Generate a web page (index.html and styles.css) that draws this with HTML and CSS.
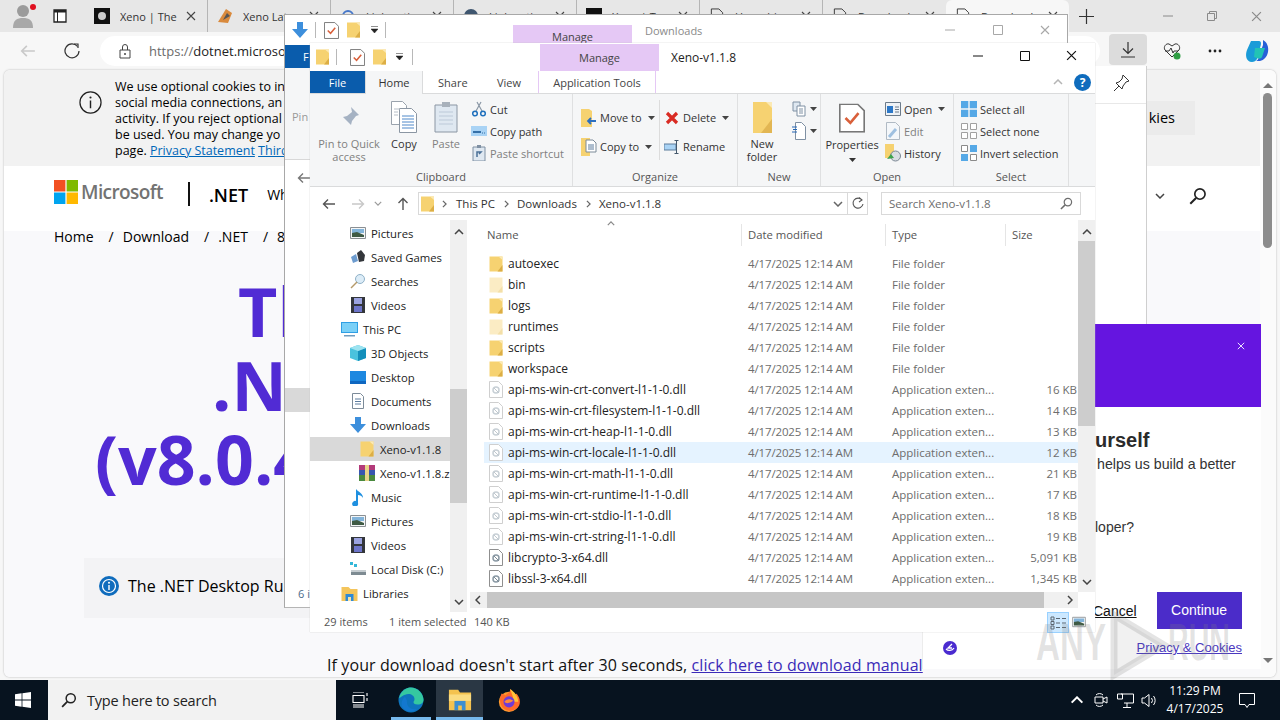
FILE: index.html
```html
<!DOCTYPE html>
<html lang="en">
<head>
<meta charset="utf-8">
<title>Xeno-v1.1.8</title>
<link rel="stylesheet" href="styles.css">
</head>
<body>
<svg class="sprite" width="0" height="0">
  <defs>
    <symbol id="folder" viewBox="0 0 13 16"><path d="M0 .5h13v15H0z" fill="#f6d271"/><path d="M13 9v6.500H8z" fill="#dcae45"/><path d="M9 .5h4V4z" fill="#fbe9b4"/></symbol>
    <symbol id="folder-pale" viewBox="0 0 13 16"><path d="M0 .5h13v15H0z" fill="#fbecc4"/><path d="M13 9v6.500H8z" fill="#f3dfa8"/></symbol>
    <symbol id="dll" viewBox="0 0 14 17"><path d="M.5.5h9l4 4v12H.5z" fill="#fff" stroke="#8f8f8f"/><circle cx="7" cy="9" r="3" fill="none" stroke="#8b9aa5" stroke-width="1.500"/><path d="M5 7l5 5" stroke="#7d8b95"/></symbol>
    <symbol id="dll-pale" viewBox="0 0 14 17"><path d="M.5.5h9l4 4v12H.5z" fill="#fff" stroke="#cfcfcf"/><circle cx="7" cy="9" r="3" fill="none" stroke="#c8d0d6" stroke-width="1.500"/><path d="M5 7l5 5" stroke="#c0c8ce"/></symbol>
    <symbol id="propdoc" viewBox="0 0 16 18"><path d="M.5.5h11l4 4v13H.5z" fill="#fff" stroke="#777"/><path d="M4 9l3 3 5-6" fill="none" stroke="#d9603b" stroke-width="1.600"/></symbol>
    <symbol id="xmark" viewBox="0 0 10 10"><path d="M1 1l8 8M9 1l-8 8" fill="none" stroke="currentColor" stroke-width="1.100"/></symbol>
    <symbol id="caret" viewBox="0 0 7 4"><path d="M0 0h7L3.500 4z" fill="currentColor"/></symbol>
    <symbol id="chev-up" viewBox="0 0 10 6"><path d="M1 5l4-4 4 4" fill="none" stroke="currentColor" stroke-width="1.500"/></symbol>
    <symbol id="chev-down" viewBox="0 0 10 6"><path d="M1 1l4 4 4-4" fill="none" stroke="currentColor" stroke-width="1.500"/></symbol>
    <symbol id="chev-right" viewBox="0 0 6 10"><path d="M1 1l4 4-4 4" fill="none" stroke="currentColor" stroke-width="1.500"/></symbol>
    <symbol id="chev-left" viewBox="0 0 6 10"><path d="M5 1L1 5l4 4" fill="none" stroke="currentColor" stroke-width="1.500"/></symbol>
    <symbol id="arrow-left" viewBox="0 0 14 12"><path d="M13 6H1.500M6 1.500L1.500 6 6 10.500" fill="none" stroke="currentColor" stroke-width="1.400"/></symbol>
    <symbol id="arrow-up" viewBox="0 0 12 14"><path d="M6 13V1.500M1.500 6L6 1.500 10.500 6" fill="none" stroke="currentColor" stroke-width="1.400"/></symbol>
    <symbol id="down-blue" viewBox="0 0 16 16"><path d="M5 0h6v7h5l-8 9-8-9h5z" fill="#3d8fdc"/></symbol>
    <symbol id="monitor" viewBox="0 0 17 15"><path d="M0 0h17v11H0z" fill="#2f9fe4"/><path d="M1 1h15v9H1z" fill="#7bd0f7"/><path d="M3 13h11v1.500H3z" fill="#6f9dc0"/></symbol>
    <symbol id="picture" viewBox="0 0 16 14"><path d="M.5 1.500h15v11H.5z" fill="#f4f6f7" stroke="#8a8f93"/><path d="M2 3h12v4H2z" fill="#83b4da"/><path d="M2 7l5-1 7 3v2H2z" fill="#3f5a44"/></symbol>
    <symbol id="film" viewBox="0 0 14 16"><path d="M0 0h14v16H0z" fill="#33363b"/><path d="M3 1h8v6H3z" fill="#9aa2df"/><path d="M3 9h8v6H3z" fill="#6d75c9"/></symbol>
    <symbol id="games" viewBox="0 0 16 16"><path d="M1 8l5-3 2 7-5 2z" fill="#6d9ccf"/><path d="M7 4l4-3 4 5-1 6-5 1z" fill="#33363b"/></symbol>
    <symbol id="searches" viewBox="0 0 16 16"><circle cx="10" cy="6" r="4.500" fill="#dcecf7" stroke="#8fb1c8"/><path d="M7 9l-6 6" stroke="#b59a6a" stroke-width="1.500"/></symbol>
    <symbol id="cube" viewBox="0 0 16 16"><path d="M8 0l8 3v10l-8 3-8-3V3z" fill="#4ac2dd"/><path d="M8 6l8-3v10l-8 3z" fill="#138fbb"/><path d="M0 3l8-3 8 3-8 3z" fill="#9de3f0"/></symbol>
    <symbol id="desktop" viewBox="0 0 16 13"><path d="M0 0h16v13H0z" fill="#1d88e0"/><path d="M0 10h16v3H0z" fill="#0f67c0"/></symbol>
    <symbol id="document" viewBox="0 0 12 16"><path d="M.5.5h8l3 3v12H.5z" fill="#fff" stroke="#7c8b99"/><path d="M3 6h6M3 8.500h6M3 11h6" stroke="#5c7c9e"/></symbol>
    <symbol id="zipicon" viewBox="0 0 16 16"><path d="M0 0h16v5H0z" fill="#b33a7a"/><path d="M0 5h16v5H0z" fill="#3856b0"/><path d="M0 10h16v6H0z" fill="#4a8a3f"/><path d="M6 0h4v16H6z" fill="#e8d48a"/></symbol>
    <symbol id="music" viewBox="0 0 12 17"><path d="M4 12V0c2 3 7 4 7 9-1-2-3-3-5-3v8a3 3 0 1 1-2-2z" fill="#1f90e0"/></symbol>
    <symbol id="disk" viewBox="0 0 16 14"><path d="M1 8h15v5H1z" fill="#7e8b92"/><path d="M1 8h15v2H1z" fill="#c6cdd1"/><path d="M0 0h3v3H0zM4 2h3v3H4z" fill="#33b7d8"/></symbol>
    <symbol id="libraries" viewBox="0 0 16 15"><path d="M0 1h7l2 2h7v12H0z" fill="#f4c55c"/><path d="M4 8h8v7H4z" fill="#2f8ad6"/><path d="M6.500 11h3v4h-3z" fill="#f6e3a8"/></symbol>
    <symbol id="pin" viewBox="0 0 24 24"><path d="M14 2l8 8-3 1-4 5-1 4-4-4-6 6 6-6-4-4 4-1 5-4z" fill="#a5b2c3"/></symbol>
    <symbol id="copy" viewBox="0 0 26 32"><path d="M.5.5h11l4 4v19H.5z" fill="#fff" stroke="#9aa3ad"/><path d="M8.500 7.500h12l5 5v19h-17z" fill="#fff" stroke="#8b96a3"/><path d="M11 15h12M11 18h12M11 21h12M11 24h12M11 27h12" stroke="#4f88c9"/><path d="M3 8h6M3 11h4M3 14h4" stroke="#b6bec7"/></symbol>
    <symbol id="paste" viewBox="0 0 24 32"><path d="M1 4h22v27H1z" fill="#dfe8f1" stroke="#8b96a3"/><path d="M8 1h8v5H8z" fill="#a8b1bb"/><path d="M5 11h14M5 15h14M5 19h14M5 23h14" stroke="#bcc9d8"/></symbol>
    <symbol id="scissors" viewBox="0 0 16 16"><path d="M10 1L5 10M6 1l5 9" fill="none" stroke="#8a97a5" stroke-width="1.200"/><circle cx="4" cy="12.500" r="2.300" fill="none" stroke="#1f70bd" stroke-width="1.500"/><circle cx="12" cy="12.500" r="2.300" fill="none" stroke="#1f70bd" stroke-width="1.500"/></symbol>
    <symbol id="path" viewBox="0 0 16 12"><path d="M0 1h16v10H0z" fill="#a9d3f5"/><path d="M2 7h8" stroke="#3570a8" stroke-width="2"/><path d="M11 8h3" stroke="#3570a8" stroke-dasharray="1 1"/></symbol>
    <symbol id="shortcut" viewBox="0 0 14 16"><path d="M1 2h12v14H1z" fill="#dfe8f1" stroke="#7f90a3"/><path d="M5 0h4v3H5z" fill="#7f90a3"/><path d="M5 12V7h4l-2 2" fill="none" stroke="#4a6f96" stroke-width="1.500"/></symbol>
    <symbol id="moveto" viewBox="0 0 16 18"><path d="M0 0h8l3 2v16H0z" fill="#f6d271"/><path d="M15 12H7M10 9l-3 3 3 3" fill="none" stroke="#2c6fc0" stroke-width="1.800"/></symbol>
    <symbol id="copyto" viewBox="0 0 16 18"><path d="M0 0h9v18H0z" fill="#f6d271"/><path d="M5 2h7l3 3v9H5z" fill="#fff" stroke="#7d8b99"/><path d="M7 7h6M7 9h6M7 11h6" stroke="#5c7c9e"/></symbol>
    <symbol id="delete" viewBox="0 0 14 14"><path d="M2 2l10 10M12 2L2 12" stroke="#d92b23" stroke-width="3.200"/></symbol>
    <symbol id="rename" viewBox="0 0 16 14"><path d="M0 4h12v6H0z" fill="#a9d3f5" stroke="#5d7d9c"/><path d="M12.500 0v14M10.500 .5h4M10.500 13.500h4" stroke="#44586c"/></symbol>
    <symbol id="newfolder" viewBox="0 0 19 32"><path d="M0 1h19v31H0z" fill="#f6d271"/><path d="M19 18v14H8z" fill="#e2b653"/><path d="M13 1h6v6z" fill="#fbe9b4"/></symbol>
    <symbol id="newitem" viewBox="0 0 14 16"><path d="M1 1h7v9H1z" fill="#dfe8f1" stroke="#7f90a3"/><path d="M5 5h8v10H5z" fill="#fff" stroke="#7f90a3"/><path d="M7 8h4M7 10h4M7 12h4" stroke="#7f90a3"/></symbol>
    <symbol id="easy" viewBox="0 0 14 18"><path d="M3.500 .5h6l4 4v13h-10z" fill="#fff" stroke="#7f90a3"/><path d="M0 5h5M1 7.500h4M0 10h5" stroke="#2667b5"/></symbol>
    <symbol id="openicon" viewBox="0 0 16 14"><path d="M.5.5h15v13H.5z" fill="#eef2f6" stroke="#6c7b8a"/><path d="M2 4h6v7H2z" fill="#2c78c8"/><path d="M10 5h4M10 7.500h4M10 10h4" stroke="#6c7b8a"/></symbol>
    <symbol id="edit" viewBox="0 0 14 18"><path d="M.5.5h9l4 4v13H.5z" fill="#f4f7fa" stroke="#b0bac4"/><path d="M3 15L10 7" stroke="#9fc0e0" stroke-width="3"/></symbol>
    <symbol id="history" viewBox="0 0 16 18"><path d="M0 0h9v14H0z" fill="#f6d271"/><circle cx="10.500" cy="12" r="5" fill="#d9dee3" stroke="#7b8794"/><path d="M2 15l4-5 3 4" fill="#3fa34d"/></symbol>
    <symbol id="selall" viewBox="0 0 16 16"><path d="M0 0h7.300v7.300H0zM8.700 0H16v7.300H8.700zM0 8.700h7.300V16H0zM8.700 8.700H16V16H8.700z" fill="#55a8e6"/></symbol>
    <symbol id="selnone" viewBox="0 0 16 16"><path d="M.5.5h6v6h-6zM9.500.5h6v6h-6zM.5 9.500h6v6h-6zM9.500 9.500h6v6h-6z" fill="#fff" stroke="#a0a0a0"/></symbol>
    <symbol id="selinv" viewBox="0 0 16 16"><path d="M9 0h7v7H9zM0 9h7v7H0z" fill="#55a8e6"/><path d="M.5.5h6v6h-6zM9.500 9.500h6v6h-6z" fill="#fff" stroke="#8a8a8a"/></symbol>
    <symbol id="magnifier" viewBox="0 0 14 14"><circle cx="8.500" cy="5.500" r="4" fill="none" stroke="currentColor" stroke-width="1.300"/><path d="M5.500 8.500L1 13" stroke="currentColor" stroke-width="1.600"/></symbol>
  </defs>
</svg>

<div class="screen">
  <div class="edge">
    <div class="tabstrip">
      <div class="strip-lead">
        <span class="avatar"><svg width="20" height="26" viewBox="0 0 20 26"><circle cx="10" cy="8" r="6" fill="#9b9b9b"/><path d="M0 25c0-8 4-10 10-10s10 2 10 10z" fill="#a8a8a8"/></svg><span class="avatar-dot"></span></span>
        <svg class="vtabs" width="14" height="14" viewBox="0 0 14 14"><path d="M1 1h12v12H1z" fill="#fff" stroke="#222" stroke-width="1.300"/><path d="M1 1h12v2.500H1z" fill="#222"/><path d="M4.500 3v10" stroke="#222"/></svg>
      </div>
      <div class="tab tab-sep"><svg class="fav" width="16" height="16" viewBox="0 0 16 16"><path d="M0 0h16v16H0z" fill="#111"/><circle cx="8" cy="8" r="4" fill="#ccc"/></svg><span class="tab-title">Xeno | The</span><svg class="tab-x" width="10" height="10"><use href="#xmark"/></svg></div>
      <div class="tab tab-sep"><svg class="fav" width="16" height="16" viewBox="0 0 16 16"><path d="M1 14L9 1l6 4-4 10z" fill="#d98a3d"/><path d="M6 12l4-7 3 3z" fill="#555"/></svg><span class="tab-title">Xeno Lat</span><svg class="tab-x" width="10" height="10"><use href="#xmark"/></svg></div>
      <div class="tab tab-sep"><svg class="fav" width="16" height="16" viewBox="0 0 16 16"><circle cx="8" cy="8" r="5" fill="none" stroke="#4778c9" stroke-width="2"/></svg><span class="tab-title">Linkvertis</span><svg class="tab-x" width="10" height="10"><use href="#xmark"/></svg></div>
      <div class="tab tab-sep"><svg class="fav" width="16" height="16" viewBox="0 0 16 16"><circle cx="8" cy="8" r="7" fill="#3f566f"/></svg><span class="tab-title">Linkvertis</span><svg class="tab-x" width="10" height="10"><use href="#xmark"/></svg></div>
      <div class="tab tab-sep"><svg class="fav" width="16" height="16" viewBox="0 0 16 16"><path d="M0 0h16v16H0z" fill="#111"/></svg><span class="tab-title">Xeno | T</span><svg class="tab-x" width="10" height="10"><use href="#xmark"/></svg></div>
      <div class="tab tab-sep"><svg class="fav" width="16" height="16" viewBox="0 0 14 17"><path d="M1 1h8l4 4v11H1z" fill="none" stroke="#333"/></svg><span class="tab-title">Hanashi</span><svg class="tab-x" width="10" height="10"><use href="#xmark"/></svg></div>
      <div class="tab"><svg class="fav" width="16" height="16" viewBox="0 0 14 17"><path d="M1 1h8l4 4v11H1z" fill="none" stroke="#333"/></svg><span class="tab-title">Download</span><svg class="tab-x" width="10" height="10"><use href="#xmark"/></svg></div>
      <div class="tab tab-active"><svg class="fav" width="16" height="16" viewBox="0 0 14 17"><path d="M1 1h8l4 4v11H1z" fill="none" stroke="#333"/></svg><span class="tab-title">Download</span><svg class="tab-x" width="10" height="10"><use href="#xmark"/></svg></div>
      <svg class="newtab" width="15" height="15" viewBox="0 0 15 15"><path d="M7.500 0v15M0 7.500h15" stroke="#333" stroke-width="1.200"/></svg>
      <div class="edge-ctrl">
        <svg width="10" height="10" viewBox="0 0 10 10"><path d="M0 5h10" stroke="#8a8a8a"/></svg>
        <svg width="10" height="10" viewBox="0 0 10 10"><path d="M.5 2.500h7v7h-7zM2.500 2.500v-2h7v7h-2" fill="none" stroke="#8a8a8a"/></svg>
        <svg class="edge-x" width="11" height="11"><use href="#xmark"/></svg>
      </div>
    </div>
    <div class="toolbar">
      <svg class="tb-back" width="16" height="14"><use href="#arrow-left"/></svg>
      <svg class="tb-reload" width="16" height="16" viewBox="0 0 16 16"><path d="M13.500 3.500A7 7 0 1 0 15 8" fill="none" stroke="#333" stroke-width="1.200"/><path d="M10 1h4v4" fill="none" stroke="#333" stroke-width="1.200"/></svg>
      <div class="omnibox">
        <svg width="12" height="15" viewBox="0 0 12 15"><path d="M1 6h10v8H1zM3.500 6V3a2.500 2.500 0 0 1 5 0v3" fill="none" stroke="#444"/><circle cx="6" cy="10" r="1" fill="#444"/></svg>
        <span class="url"><span class="url-dim">https://</span>dotnet.microso</span>
      </div>
      <div class="tb-right">
        <span class="dl-btn"><svg width="14" height="16" viewBox="0 0 14 16"><path d="M7 0v11M2 6.500l5 5 5-5M0 15h14" fill="none" stroke="#333" stroke-width="1.200"/></svg></span>
        <svg class="tb-heart" width="18" height="18" viewBox="0 0 18 18"><path d="M9 15L2 8c-2-3 1-7 4-6l3 2 3-2c3-1 6 3 4 6z" fill="none" stroke="#333"/><path d="M2 9h4l2-3 2 5 1-2h4" fill="none" stroke="#333"/><circle cx="14" cy="14" r="3.500" fill="#2f9e44"/></svg>
        <svg class="tb-dots" width="14" height="4" viewBox="0 0 14 4"><circle cx="2" cy="2" r="1.400" fill="#222"/><circle cx="7" cy="2" r="1.400" fill="#222"/><circle cx="12" cy="2" r="1.400" fill="#222"/></svg>
        <svg class="tb-copilot" width="24" height="24" viewBox="0 0 24 24"><path d="M6 2h8c3 0 2 4 1 7l-3 11c-1 2-3 3-5 3-6 0-7-7-5-12z" fill="#1a9bd8"/><path d="M18 1c4 2 6 7 5 12-1 5-4 8-8 9H11c3-1 3-5 4-8l3-8z" fill="#2761d8"/><path d="M10 9h10l-3 9c-2 3-5 1-8 0z" fill="#22c3b5"/></svg>
      </div>
    </div>
    <main class="viewport">
      <div class="page">
        <div class="cookie">
          <svg class="cookie-i" width="23" height="23" viewBox="0 0 24 24"><circle cx="12" cy="12" r="11" fill="none" stroke="#222" stroke-width="1.300"/><path d="M12 10v8" stroke="#222" stroke-width="1.500"/><circle cx="12" cy="6.800" r="1.100" fill="#222"/></svg>
          <p class="cookie-text">We use optional cookies to in<br>social media connections, an<br>activity. If you reject optional<br>be used. You may change yo<br>page. <a href="#">Privacy Statement</a> <a href="#">Third</a></p>
          <span class="cookie-btn">kies</span>
        </div>
        <header class="site-head">
          <svg class="ms-logo" width="24" height="24" viewBox="0 0 24 24"><path d="M0 0h11.400v11.400H0z" fill="#f25022"/><path d="M12.600 0H24v11.400H12.600z" fill="#7fba00"/><path d="M0 12.600h11.400V24H0z" fill="#00a4ef"/><path d="M12.600 12.600H24V24H12.600z" fill="#ffb900"/></svg>
          <span class="ms-word">Microsoft</span>
          <span class="head-div"></span>
          <span class="net">.NET</span>
          <span class="head-link">Wh</span>
          <span class="head-tools">
            <svg width="10" height="6" class="head-chev"><use href="#chev-down"/></svg>
            <svg width="18" height="18" viewBox="0 0 14 14" class="head-search"><use href="#magnifier"/></svg>
          </span>
        </header>
        <div class="page-body">
          <nav class="crumbs"><span>Home</span><span class="crumb-s">/</span><span>Download</span><span class="crumb-s">/</span><span>.NET</span><span class="crumb-s">/</span><span>8</span></nav>
          <h1 class="hero"><span class="hero-1">Th</span><span class="hero-2">.NE</span><span class="hero-3">(v8.0.4</span></h1>
          <div class="note">
            <svg width="20" height="20" viewBox="0 0 20 20"><circle cx="10" cy="10" r="10" fill="#0f6cbd"/><circle cx="10" cy="10" r="6.500" fill="none" stroke="#fff" stroke-width="1.200"/><path d="M10 9v5" stroke="#fff" stroke-width="1.400"/><circle cx="10" cy="6.700" r="1" fill="#fff"/></svg>
            <span>The .NET Desktop Ru</span>
          </div>
          <p class="manual">If your download doesn't start after 30 seconds, <a href="#">click here to download manual</a></p>
        </div>
      </div>
      <div class="page-scroll">
        <span class="ps-up"></span>
        <span class="ps-thumb"></span>
        <span class="ps-down"></span>
      </div>
    </main>
  </div>

  <footer class="taskbar">
    <svg class="start" width="16" height="16" viewBox="0 0 16 16"><path d="M0 2.200l6.600-.9v6.300H0zM7.400 1.200L16 0v7.600H7.400zM0 8.400h6.600v6.300L0 13.800zM7.400 8.400H16V16l-8.600-1.200z" fill="#fff"/></svg>
    <div class="tb-search"><svg width="16" height="16" viewBox="0 0 14 14"><use href="#magnifier"/></svg><span>Type here to search</span></div>
    <svg class="tv" width="16" height="16" viewBox="0 0 16 16"><path d="M1 0h11M1 15h11M1 13h11M1 3.500h11v7H1zM15 1v3M15 6v3" fill="none" stroke="#fff" stroke-width="1.100"/></svg>
    <span class="task task-edge"><svg width="26" height="26" viewBox="0 0 26 26"><circle cx="13" cy="13" r="12.500" fill="#0e74bd"/><path d="M1 11C3 3 9 .500 13 .500c6 0 12 5 12.500 12 .2 3-2 5-6 5-3 0-4-1-4-2.500 0-1 1-1 1-3 0-3-3-5-6-5-5 0-8 4-9.500 4z" fill="#35c8a0"/><path d="M9 15c0 5 4 8 10 7-4 4-13 3-15-3-1-3 0-7 3-9 1 1 2 3 2 5z" fill="#1378cf"/></svg></span>
    <span class="task task-files"><svg width="24" height="22" viewBox="0 0 26 22"><path d="M1 0h10l2 3h12v19H1z" fill="#f4c24f"/><path d="M1 5h24v7H1z" fill="#fbdc82"/><path d="M7 12h12v10H7z" fill="#3d8ed0"/><path d="M11 17h4v5h-4z" fill="#f4c24f"/></svg></span>
    <span class="task task-fx"><svg width="24" height="26" viewBox="0 0 26 26"><circle cx="13" cy="15" r="11" fill="#ff9a2e"/><path d="M5 6C3 10 2 16 6 21c6 6 15 4 18-2 2-5 0-10-3-13-1 1 0 4-2 4C19 6 16 3 14 1c1 4-3 5-5 7-1-1-2-1-4-2z" fill="#ff6a2a"/><path d="M14 1c5 3 9 8 9 14h-5c0-5-2-9-4-14z" fill="#ffc23a"/><circle cx="13" cy="15" r="6" fill="#6f3bd8"/><path d="M8 15c2-3 6-4 10-1-2 0-3 2-5 2-2 1-4 0-5-1z" fill="#ff8a3a"/></svg></span>
    <div class="tray">
      <svg width="14" height="8" viewBox="0 0 10 6" class="tray-caret"><use href="#chev-up"/></svg>
      <svg class="tray-meet" width="14" height="18" viewBox="0 0 14 18"><path d="M2 4a5 5 0 0 1 7 0M2 14a5 5 0 0 0 7 0" fill="none" stroke="#fff"/><path d="M1 6h8v6H1zM9 8l4-2v6l-4-2" fill="none" stroke="#fff"/></svg>
      <svg width="17" height="15" viewBox="0 0 17 15"><path d="M4 1h12.500v9H7M0.500 1h5v5h-5zM10 10v4M6 14.500h8" fill="none" stroke="#fff"/></svg>
      <svg width="17" height="15" viewBox="0 0 17 15"><path d="M1 5h2.500L8 1.500v12L3.500 10H1zM10.500 5a4 4 0 0 1 0 5M12.500 3a7 7 0 0 1 0 9" fill="none" stroke="#fff"/></svg>
      <div class="clock"><span>11:29 PM</span><span>4/17/2025</span></div>
      <svg class="notif" width="16" height="15" viewBox="0 0 16 15"><path d="M.5.5h15v11H10l-2 3-2-3H.5z" fill="none" stroke="#fff"/></svg>
    </div>
  </footer>

  <aside class="flyout">
    <svg width="18" height="18" viewBox="0 0 18 18" class="fly-pin"><path d="M11 1l6 6-3 1-3 4-1 3-3-3-5 5 5-5-3-3 3-1 3-3z" fill="#fff" stroke="#333"/></svg>
  </aside>

  <section class="survey">
    <div class="survey-head"><svg width="8" height="8" viewBox="0 0 10 10" class="survey-x"><use href="#xmark"/></svg></div>
    <div class="survey-body">
      <h2 class="survey-title">urself</h2>
      <p class="survey-line">helps us build a better</p>
      <p class="survey-q">loper?</p>
      <div class="survey-actions"><a href="#" class="survey-cancel">Cancel</a><span class="survey-go">Continue</span></div>
      <div class="survey-foot">
        <svg class="survey-swirl" width="14" height="14" viewBox="0 0 14 14"><circle cx="7" cy="7" r="7" fill="#4a2bd0"/><path d="M3 8c2 2 6 2 8-1M9 3L5 7h4" fill="none" stroke="#fff" stroke-width="1.300"/></svg>
        <a href="#" class="survey-privacy">Privacy &amp; Cookies</a>
      </div>
    </div>
  </section>

  <section class="win win-back">
    <div class="back-title">
      <svg width="16" height="16"><use href="#down-blue"/></svg>
      <span class="qat-sep"></span>
      <svg width="15" height="17"><use href="#propdoc"/></svg>
      <svg width="13" height="16"><use href="#folder"/></svg>
      <svg width="7" height="8" class="qat-drop" viewBox="0 0 7 7"><path d="M0 0h7M0 2.500h7L3.500 6.500z" fill="#222" stroke="#222" stroke-width=".5"/></svg>
      <span class="qat-sep"></span>
      <span class="back-manage">Manage</span>
      <span class="back-name">Downloads</span>
      <span class="back-ctrl">
        <svg width="10" height="10" viewBox="0 0 10 10"><path d="M0 5h10" stroke="#a8a8a8"/></svg>
        <svg width="10" height="10" viewBox="0 0 10 10"><path d="M.5.500h9v9h-9z" fill="none" stroke="#a8a8a8"/></svg>
        <svg width="10" height="10" class="back-x"><use href="#xmark"/></svg>
      </span>
    </div>
    <div class="back-strip">
      <span class="back-file">F</span>
      <div class="back-ribbon"><span class="back-pin">Pin</span></div>
      <div class="back-nav"><svg width="14" height="12"><use href="#arrow-left"/></svg></div>
      <span class="back-sel"></span>
      <span class="back-count">6 i</span>
    </div>
  </section>

  <section class="win win-front">
    <div class="title-row">
      <svg width="13" height="16"><use href="#folder"/></svg>
      <span class="qat-sep qat-sep-1"></span>
      <svg class="qat-doc" width="15" height="17"><use href="#propdoc"/></svg>
      <svg class="qat-fold" width="13" height="16"><use href="#folder"/></svg>
      <svg width="7" height="8" class="qat-drop" viewBox="0 0 7 7"><path d="M0 0h7M0 2.500h7L3.500 6.500z" fill="#222" stroke="#222" stroke-width=".5"/></svg>
      <span class="qat-sep qat-sep-2"></span>
      <span class="manage">Manage</span>
      <span class="win-name">Xeno-v1.1.8</span>
      <span class="win-ctrl">
        <svg width="10" height="10" viewBox="0 0 10 10"><path d="M0 5h10" stroke="#111"/></svg>
        <svg width="10" height="10" viewBox="0 0 10 10"><path d="M.5.500h9v9h-9z" fill="none" stroke="#111"/></svg>
        <svg width="11" height="11" class="win-x"><use href="#xmark"/></svg>
      </span>
    </div>
    <div class="tabs-row">
      <span class="rtab rtab-file">File</span>
      <span class="rtab rtab-home">Home</span>
      <span class="rtab rtab-share">Share</span>
      <span class="rtab rtab-view">View</span>
      <span class="rtab rtab-app">Application Tools</span>
      <span class="rtab-tools">
        <svg width="10" height="6" class="rt-chev"><use href="#chev-up"/></svg>
        <span class="help">?</span>
      </span>
    </div>
    <div class="ribbon">
      <div class="group g-clip">
        <div class="g-main">
          <div class="big b-pin dis"><svg class="pin-ic" width="24" height="24"><use href="#pin"/></svg><span>Pin to Quick<br>access</span></div>
          <div class="big b-copy"><svg width="26" height="32"><use href="#copy"/></svg><span>Copy</span></div>
          <div class="big b-paste dis"><svg width="24" height="32"><use href="#paste"/></svg><span>Paste</span></div>
          <div class="stack">
            <div class="small"><svg width="16" height="16"><use href="#scissors"/></svg><span>Cut</span></div>
            <div class="small"><svg width="16" height="12"><use href="#path"/></svg><span>Copy path</span></div>
            <div class="small dis"><svg width="14" height="16"><use href="#shortcut"/></svg><span>Paste shortcut</span></div>
          </div>
        </div>
        <div class="g-label">Clipboard</div>
      </div>
      <div class="group g-org">
        <div class="g-main">
          <div class="stack stack-org stack-org-a">
            <div class="small"><svg width="16" height="18"><use href="#moveto"/></svg><span>Move to</span><svg class="dd" width="7" height="4"><use href="#caret"/></svg></div>
            <div class="small"><svg width="16" height="18"><use href="#copyto"/></svg><span>Copy to</span><svg class="dd" width="7" height="4"><use href="#caret"/></svg></div>
          </div>
          <span class="org-div"></span>
          <div class="stack stack-org stack-org-b">
            <div class="small"><svg width="14" height="14"><use href="#delete"/></svg><span>Delete</span><svg class="dd" width="7" height="4"><use href="#caret"/></svg></div>
            <div class="small"><svg width="16" height="14"><use href="#rename"/></svg><span>Rename</span></div>
          </div>
        </div>
        <div class="g-label">Organize</div>
      </div>
      <div class="group g-new">
        <div class="g-main">
          <div class="big b-new"><svg width="19" height="32"><use href="#newfolder"/></svg><span>New<br>folder</span></div>
          <div class="stack stack-new">
            <div class="small"><svg width="14" height="16"><use href="#newitem"/></svg><svg class="dd" width="7" height="4"><use href="#caret"/></svg></div>
            <div class="small"><svg width="14" height="18"><use href="#easy"/></svg><svg class="dd" width="7" height="4"><use href="#caret"/></svg></div>
          </div>
        </div>
        <div class="g-label">New</div>
      </div>
      <div class="group g-open">
        <div class="g-main">
          <div class="big b-prop"><svg width="26" height="34" viewBox="0 0 16 18"><use href="#propdoc"/></svg><span>Properties<br><svg width="7" height="4"><use href="#caret"/></svg></span></div>
          <div class="stack stack-open">
            <div class="small"><svg width="16" height="14"><use href="#openicon"/></svg><span>Open</span><svg class="dd" width="7" height="4"><use href="#caret"/></svg></div>
            <div class="small dis"><svg width="14" height="18"><use href="#edit"/></svg><span>Edit</span></div>
            <div class="small"><svg width="16" height="18"><use href="#history"/></svg><span>History</span></div>
          </div>
        </div>
        <div class="g-label">Open</div>
      </div>
      <div class="group g-sel">
        <div class="g-main">
          <div class="stack stack-sel">
            <div class="small"><svg width="16" height="16"><use href="#selall"/></svg><span>Select all</span></div>
            <div class="small"><svg width="16" height="16"><use href="#selnone"/></svg><span>Select none</span></div>
            <div class="small"><svg width="16" height="16"><use href="#selinv"/></svg><span>Invert selection</span></div>
          </div>
        </div>
        <div class="g-label">Select</div>
      </div>
    </div>
    <div class="addr-row">
      <svg class="nav-a" width="14" height="12"><use href="#arrow-left"/></svg>
      <svg class="nav-b" width="14" height="12" viewBox="0 0 14 12"><path d="M1 6h11.500M8 1.500L12.500 6 8 10.500" fill="none" stroke="#c8c8c8" stroke-width="1.400"/></svg>
      <svg class="nav-c" width="8" height="5"><use href="#chev-down"/></svg>
      <svg class="nav-d" width="12" height="14"><use href="#arrow-up"/></svg>
      <div class="addr">
        <svg width="13" height="16"><use href="#folder"/></svg>
        <svg class="sep-c sep-first" width="5" height="8"><use href="#chev-right"/></svg><span>This PC</span>
        <svg class="sep-c" width="5" height="8"><use href="#chev-right"/></svg><span>Downloads</span>
        <svg class="sep-c" width="5" height="8"><use href="#chev-right"/></svg><span>Xeno-v1.1.8</span>
        <span class="addr-end">
          <svg width="10" height="6"><use href="#chev-down"/></svg>
          <span class="addr-reload"><svg width="12" height="13" viewBox="0 0 12 13"><path d="M10 3a5 5 0 1 0 1 4M7 .5l3 2.500-3 2" fill="none" stroke="#555" stroke-width="1.100"/></svg></span>
        </span>
      </div>
      <div class="search">
        <span>Search Xeno-v1.1.8</span>
        <svg width="13" height="13" viewBox="0 0 14 14"><use href="#magnifier"/></svg>
      </div>
    </div>
    <div class="content">
      <div class="nav-pane">
        <ul class="tree">
          <li class="t2"><svg width="16" height="14"><use href="#picture"/></svg>Pictures</li>
          <li class="t2"><svg width="16" height="16"><use href="#games"/></svg>Saved Games</li>
          <li class="t2"><svg width="16" height="16"><use href="#searches"/></svg>Searches</li>
          <li class="t2"><svg width="14" height="16"><use href="#film"/></svg>Videos</li>
          <li class="t1"><svg width="17" height="15"><use href="#monitor"/></svg>This PC</li>
          <li class="t2"><svg width="16" height="16"><use href="#cube"/></svg>3D Objects</li>
          <li class="t2"><svg width="16" height="13"><use href="#desktop"/></svg>Desktop</li>
          <li class="t2"><svg width="12" height="16"><use href="#document"/></svg>Documents</li>
          <li class="t2"><svg width="16" height="16"><use href="#down-blue"/></svg>Downloads</li>
          <li class="t3 t-sel"><svg width="13" height="16"><use href="#folder"/></svg>Xeno-v1.1.8</li>
          <li class="t3"><svg width="16" height="16"><use href="#zipicon"/></svg>Xeno-v1.1.8.z</li>
          <li class="t2"><svg width="12" height="17"><use href="#music"/></svg>Music</li>
          <li class="t2"><svg width="16" height="14"><use href="#picture"/></svg>Pictures</li>
          <li class="t2"><svg width="14" height="16"><use href="#film"/></svg>Videos</li>
          <li class="t2"><svg width="16" height="14"><use href="#disk"/></svg>Local Disk (C:)</li>
          <li class="t1"><svg width="16" height="15"><use href="#libraries"/></svg>Libraries</li>
        </ul>
        <div class="vbar vbar-nav">
          <svg width="10" height="6"><use href="#chev-up"/></svg>
          <span class="vthumb"></span>
          <svg width="10" height="6"><use href="#chev-down"/></svg>
        </div>
      </div>
      <div class="list-pane">
        <div class="list-main">
          <div class="list-col">
            <div class="list-head">
              <span class="sort-mark"><svg width="8" height="5"><use href="#chev-up"/></svg></span>
              <span>Name</span><span>Date modified</span><span>Type</span><span>Size</span>
            </div>
            <div class="rows">
              <div class="row"><span><svg width="13" height="16"><use href="#folder"/></svg>autoexec</span><span>4/17/2025 12:14 AM</span><span>File folder</span><span></span></div>
              <div class="row"><span><svg width="13" height="16"><use href="#folder-pale"/></svg>bin</span><span>4/17/2025 12:14 AM</span><span>File folder</span><span></span></div>
              <div class="row"><span><svg width="13" height="16"><use href="#folder"/></svg>logs</span><span>4/17/2025 12:14 AM</span><span>File folder</span><span></span></div>
              <div class="row"><span><svg width="13" height="16"><use href="#folder-pale"/></svg>runtimes</span><span>4/17/2025 12:14 AM</span><span>File folder</span><span></span></div>
              <div class="row"><span><svg width="13" height="16"><use href="#folder"/></svg>scripts</span><span>4/17/2025 12:14 AM</span><span>File folder</span><span></span></div>
              <div class="row"><span><svg width="13" height="16"><use href="#folder"/></svg>workspace</span><span>4/17/2025 12:14 AM</span><span>File folder</span><span></span></div>
              <div class="row"><span><svg width="14" height="17"><use href="#dll-pale"/></svg>api-ms-win-crt-convert-l1-1-0.dll</span><span>4/17/2025 12:14 AM</span><span>Application exten...</span><span>16 KB</span></div>
              <div class="row"><span><svg width="14" height="17"><use href="#dll-pale"/></svg>api-ms-win-crt-filesystem-l1-1-0.dll</span><span>4/17/2025 12:14 AM</span><span>Application exten...</span><span>14 KB</span></div>
              <div class="row"><span><svg width="14" height="17"><use href="#dll-pale"/></svg>api-ms-win-crt-heap-l1-1-0.dll</span><span>4/17/2025 12:14 AM</span><span>Application exten...</span><span>13 KB</span></div>
              <div class="row row-sel"><span><svg width="14" height="17"><use href="#dll-pale"/></svg>api-ms-win-crt-locale-l1-1-0.dll</span><span>4/17/2025 12:14 AM</span><span>Application exten...</span><span>12 KB</span></div>
              <div class="row"><span><svg width="14" height="17"><use href="#dll-pale"/></svg>api-ms-win-crt-math-l1-1-0.dll</span><span>4/17/2025 12:14 AM</span><span>Application exten...</span><span>21 KB</span></div>
              <div class="row"><span><svg width="14" height="17"><use href="#dll-pale"/></svg>api-ms-win-crt-runtime-l1-1-0.dll</span><span>4/17/2025 12:14 AM</span><span>Application exten...</span><span>17 KB</span></div>
              <div class="row"><span><svg width="14" height="17"><use href="#dll-pale"/></svg>api-ms-win-crt-stdio-l1-1-0.dll</span><span>4/17/2025 12:14 AM</span><span>Application exten...</span><span>18 KB</span></div>
              <div class="row"><span><svg width="14" height="17"><use href="#dll-pale"/></svg>api-ms-win-crt-string-l1-1-0.dll</span><span>4/17/2025 12:14 AM</span><span>Application exten...</span><span>19 KB</span></div>
              <div class="row"><span><svg width="14" height="17"><use href="#dll"/></svg>libcrypto-3-x64.dll</span><span>4/17/2025 12:14 AM</span><span>Application exten...</span><span>5,091 KB</span></div>
              <div class="row"><span><svg width="14" height="17"><use href="#dll"/></svg>libssl-3-x64.dll</span><span>4/17/2025 12:14 AM</span><span>Application exten...</span><span>1,345 KB</span></div>
            </div>
          </div>
          <div class="vbar vbar-list">
            <svg width="10" height="6"><use href="#chev-up"/></svg>
            <span class="vthumb"></span>
            <svg width="10" height="6"><use href="#chev-down"/></svg>
          </div>
        </div>
        <div class="hbar">
          <svg width="6" height="10"><use href="#chev-left"/></svg>
          <span class="hthumb"></span>
          <svg width="6" height="10"><use href="#chev-right"/></svg>
        </div>
      </div>
    </div>
    <div class="status">
      <span class="st-a">29 items</span><span class="st-b">1 item selected</span><span>140 KB</span>
      <span class="views">
        <span class="view-on"><svg width="17" height="15" viewBox="0 0 17 15"><path d="M1 2h3v3H1zM1 6.500h3v3H1zM1 11h3v3H1zM6 3.500h4M6 8h4M6 12.500h4M12 3.500h4M12 8h4M12 12.500h4" fill="none" stroke="#5c6670"/></svg></span>
        <svg width="14" height="12" viewBox="0 0 16 14"><use href="#picture"/></svg>
      </span>
    </div>
  </section>

  <svg class="watermark" width="210" height="70" viewBox="0 0 210 70">
    <text class="wm-text" x="0" y="50" textLength="70" lengthAdjust="spacingAndGlyphs">ANY</text>
    <path d="M78 5l0 60 50-30z" fill="rgba(120,120,120,.1)" stroke="rgba(120,120,120,.2)" stroke-width="7"/>
    <text class="wm-text" x="132" y="50" textLength="62" lengthAdjust="spacingAndGlyphs">RUN</text>
  </svg>
</div>
</body>
</html>
```
FILE: styles.css
```css
* { box-sizing: border-box; }
html, body { margin: 0; padding: 0; }
body { width: 1280px; height: 720px; overflow: hidden; font-family: "Open Sans", "Noto Sans", sans-serif; background: #fff; }
.sprite { position: absolute; width: 0; height: 0; }
ul { list-style: none; margin: 0; padding: 0; }
p, h1, h2 { margin: 0; }
svg { flex: none; display: block; }
a { color: inherit; }

.screen { position: relative; width: 1280px; height: 720px; overflow: hidden; display: flex; flex-direction: column; }
.edge { height: 680px; display: flex; flex-direction: column; background: #f7f7f7; }

.tabstrip { height: 32px; background: #e7e7e7; display: flex; align-items: center; flex: none; }
.strip-lead { width: 85px; display: flex; align-items: center; height: 100%; padding-left: 13px; }
.avatar { position: relative; width: 20px; height: 26px; }
.avatar-dot { position: absolute; right: -3px; top: 1px; width: 6px; height: 6px; background: #e01020; border-radius: 50%; }
.vtabs { margin-left: 20px; }
.tab { width: 123px; height: 100%; display: flex; align-items: center; padding: 0 11px 0 9px; font-size: 11px; color: #333; }
.tab-sep { border-right: 1px solid #b5b5b5; background-clip: padding-box; }
.tab-active { background: #f7f7f7; border-radius: 6px 6px 0 0; }
.tab-title { margin-left: 10px; flex: 1; white-space: nowrap; overflow: hidden; }
.tab-x { color: #444; }
.newtab { margin-left: 10px; }
.edge-ctrl { margin-left: auto; width: 133px; display: flex; justify-content: space-between; padding: 0 18px 0 16px; align-items: center; }
.edge-x { color: #8a8a8a; }

.toolbar { height: 38px; flex: none; background: #f7f7f7; display: flex; align-items: center; }
.tb-back { margin-left: 20px; color: #c9c9c9; }
.tb-reload { margin-left: 28px; }
.omnibox { margin-left: 20px; width: 1000px; height: 30px; background: #fff; border-radius: 15px; display: flex; align-items: center; padding-left: 19px; font-size: 13px; color: #222; }
.url { margin-left: 18px; white-space: nowrap; }
.url-dim { color: #6b6b6b; }
.tb-right { margin-left: auto; display: flex; align-items: center; padding-right: 11px; }
.dl-btn { width: 38px; height: 31px; background: #dcdcdc; border-radius: 4px; display: flex; align-items: center; justify-content: center; margin-top: -3px; }
.tb-heart { margin-left: 16px; }
.tb-dots { margin-left: 27px; }
.tb-copilot { margin-left: 23px; }

.viewport { flex: 1; min-height: 0; margin-left: 4px; margin-right: 4px; margin-bottom: 3px; display: flex; background: #fff; border-radius: 6px; overflow: hidden; box-shadow: 0 0 2px #aaa; }
.page { flex: 1; min-width: 0; display: flex; flex-direction: column; color: #000; }
.cookie { height: 96px; background: #f2f2f2; display: flex; align-items: flex-start; padding: 9px 0 0 75px; flex: none; position: relative; }
.cookie-i { margin-top: 12px; }
.cookie-text { margin-left: 13px; font-size: 12.500px; line-height: 16px; white-space: nowrap; }
.cookie-text a { color: #0067b8; }
.cookie-btn { margin-left: auto; margin-right: 65px; margin-top: 22px; width: 148px; height: 34px; background: #ebebeb; line-height: 34px; font-size: 14.500px; text-align: right; padding-right: 20px; }
.site-head { height: 65px; flex: none; display: flex; align-items: flex-start; padding: 14px 0 0 50px; }
.ms-word { margin-left: 3px; font-size: 19px; line-height: 24px; font-weight: 600; color: #737373; letter-spacing: -.6px; }
.head-div { width: 2px; height: 24px; background: #111; margin: 2px 0 0 25px; }
.net { margin: 3px 0 0 19px; font-size: 18px; line-height: 24px; font-weight: 600; }
.head-link { margin: 3px 0 0 19px; font-size: 14px; line-height: 24px; }
.head-tools { margin: 7px 53px 0 auto; width: 52px; display: flex; align-items: center; justify-content: space-between; color: #222; }
.head-chev { color: #444; }
.page-body { flex: 1; background: #f9f9fb; padding-left: 50px; position: relative; display: flex; flex-direction: column; min-height: 0; }
.crumbs { display: flex; font-size: 14px; height: 20px; line-height: 20px; margin-top: -4px; white-space: nowrap; }
.crumb-s { margin: 0 9px 0 15px; }
.hero { color: #512bd4; font-weight: 700; font-size: 68px; line-height: 74px; margin-top: 27px; margin-left: -50px; white-space: nowrap; }
.hero span { display: block; }
.hero-1 { padding-left: 234px; }
.hero-2 { padding-left: 208px; }
.hero-3 { padding-left: 91px; }
.note { margin-top: 62px; margin-left: 30px; width: 400px; height: 60px; background: #f3f3f5; display: flex; align-items: center; padding-left: 15px; gap: 9px; font-size: 16px; padding-bottom: 4px; }
.manual { position: absolute; left: 323px; top: 423px; font-size: 16px; white-space: nowrap; color: #111; letter-spacing: .1px; }
.manual a { color: #3b2bb8; }
.page-scroll { width: 16px; flex: none; background: #fbfbfb; position: relative; }
.ps-up { position: absolute; left: 3px; top: 13px; border-left: 5px solid transparent; border-right: 5px solid transparent; border-bottom: 5px solid #777; }
.ps-thumb { position: absolute; left: 3px; top: 23px; width: 9px; height: 155px; background: #8c8c8c; border-radius: 5px; }
.ps-down { position: absolute; left: 3px; bottom: 14px; border-left: 5px solid transparent; border-right: 5px solid transparent; border-top: 5px solid #777; }

.taskbar { height: 40px; flex: none; background: #07131f; display: flex; align-items: center; position: relative; color: #fff; }
.start { margin-left: 15px; }
.tb-search { margin-left: 17px; width: 288px; height: 40px; background: #f2f2f2; color: #222; display: flex; align-items: center; padding-left: 13px; gap: 10px; font-size: 14.500px; letter-spacing: -.2px; }
.tv { margin-left: 16px; }
.task { height: 40px; display: flex; align-items: center; justify-content: center; }
.task-edge { margin-left: 23px; border-bottom: 3px solid #76b9ed; width: 40px; padding-top: 3px; }
.task-files { background: #2a3744; border-bottom: 3px solid #76b9ed; margin-left: 5px; width: 47px; padding-top: 3px; }
.task-fx { width: 52px; }
.tray { margin-left: auto; display: flex; align-items: center; padding-right: 25px; }
.tray > svg { margin-right: 7px; }
.tray .tray-caret { margin-right: 10px; }
.tray .tray-meet { margin-right: 9px; }
.clock { width: 60px; display: flex; flex-direction: column; align-items: center; font-size: 12px; line-height: 18px; margin-right: 14px; }
.tray .notif { margin-right: 0; }

.flyout { position: absolute; left: 1060px; top: 66px; width: 87px; height: 258px; background: #fff; border-right: 1px solid #cfcfcf; }
.fly-pin { position: absolute; left: 52px; top: 8px; }
.flyout::after { content: ""; position: absolute; left: 0; right: 0; top: 37px; height: 1px; background: #e8e8e8; }

.survey { position: absolute; left: 922px; top: 324px; width: 339px; height: 345px; background: #fff; display: flex; flex-direction: column; border-left: 1px solid #ececec; }
.survey-head { height: 83px; background: #6515e0; position: relative; flex: none; }
.survey-x { position: absolute; right: 16px; top: 18px; color: #fff; }
.survey-body { flex: 1; padding-left: 172px; font-family: "Liberation Sans", Arial, sans-serif; color: #333; position: relative; }
.survey-title { font-size: 20px; line-height: 24px; margin-top: 21px; color: #2b2b2b; }
.survey-line { font-size: 14.200px; line-height: 20px; margin-top: 2px; margin-left: 2px; white-space: nowrap; }
.survey-q { font-size: 14px; line-height: 20px; margin-top: 43px; margin-left: 0; }
.survey-actions { display: flex; align-items: center; margin-top: 55px; margin-left: -2px; font-size: 14px; color: #111; }
.survey-go { width: 85px; height: 37px; background: #4b2cc9; color: #fff; text-align: center; line-height: 37px; margin-left: 20px; }
.survey-foot { position: absolute; left: 0; right: 19px; top: 233px; display: flex; align-items: center; padding-left: 20px; font-size: 13px; }
.survey-privacy { margin-left: auto; color: #4a38c0; white-space: nowrap; }

.win { position: absolute; background: #fff; }
.win-back { left: 284px; top: 14px; width: 784px; height: 594px; border: 1px solid #a8a8a8; border-bottom-color: #b5b5b5; font-size: 11px; color: #444; }
.back-title { height: 30px; display: flex; align-items: center; padding-left: 7px; }
.back-title > svg + .qat-sep { margin-left: 7px; }
.back-title svg + svg { margin-left: 8px; }
.qat-sep { width: 1px; height: 16px; background: #b8b8b8; margin-left: 8px; margin-right: 8px; }
.back-title .qat-drop { margin-left: 11px; }
.back-manage { margin-left: 119px; width: 119px; height: 20px; background: #e5c8f5; text-align: center; line-height: 24px; color: #444; margin-top: 10px; }
.back-name { margin-left: 13px; color: #8a8a8a; }
.back-ctrl { margin-left: auto; width: 122px; display: flex; justify-content: space-between; padding-right: 17px; }
.back-x { color: #a8a8a8; }
.back-strip { width: 25px; display: flex; flex-direction: column; position: relative; height: 562px; }
.back-file { width: 25px; height: 23px; background: #0a5cac; color: #fff; padding-left: 18px; line-height: 23px; }
.back-ribbon { height: 92px; background: #f5f6f7; padding-top: 41px; padding-left: 7px; border-bottom: 1px solid #d8d8d8; color: #999; }
.back-nav { height: 36px; display: flex; align-items: center; padding-left: 12px; color: #777; }
.back-sel { position: absolute; left: 0; top: 343px; width: 25px; height: 24px; background: #d9d9d9; }
.back-count { position: absolute; left: 13px; top: 541px; color: #4a6a8a; white-space: nowrap; }

.win-front { left: 310px; top: 43px; width: 785px; height: 589px; display: flex; flex-direction: column; font-size: 11px; color: #333; box-shadow: 0 0 1px #bbb; }
.title-row { height: 28px; flex: none; display: flex; align-items: center; padding-left: 6px; }
.qat-sep-1 { margin-left: 7px; margin-right: 0; }
.qat-doc { margin-left: 13px; }
.qat-fold { margin-left: 8px; }
.qat-drop { margin-left: 10px; }
.qat-sep-2 { margin-left: 9px; margin-right: 0; }
.manage { margin-left: 127px; width: 119px; height: 27px; background: #e5c8f5; text-align: center; line-height: 28px; margin-top: 1px; color: #444; align-self: flex-end; }
.win-name { margin-left: 12px; color: #222; font-size: 12px; }
.win-ctrl { margin-left: auto; width: 122px; display: flex; justify-content: space-between; align-items: center; padding-right: 18px; color: #111; margin-top: -3px; }

.tabs-row { height: 23px; flex: none; display: flex; align-items: stretch; line-height: 23px; position: relative; border-bottom: 1px solid #dadbdc; }
.rtab { display: block; text-align: center; white-space: nowrap; color: #444; }
.rtab-file { width: 55px; background: #0a5cac; color: #fff; }
.rtab-home { width: 58px; background: #f5f6f7; border: 1px solid #dadbdc; border-bottom: 0; border-top: 0; margin-bottom: -1px; color: #333; }
.rtab-share { margin-left: 15px; width: 28px; }
.rtab-view { margin-left: 30px; width: 26px; }
.rtab-app { margin-left: 16px; width: 118px; border: 1px solid #e5c8f5; border-top: 0; border-bottom: 0; }
.rtab-tools { margin-left: auto; display: flex; align-items: center; padding-right: 4px; gap: 11px; }
.rt-chev { color: #b5b5b5; }
.help { width: 17px; height: 17px; border-radius: 50%; background: #0f6cbd; color: #fff; font-weight: 700; font-size: 12px; line-height: 17px; text-align: center; }

.ribbon { height: 93px; flex: none; background: #f5f6f7; display: flex; border-bottom: 1px solid #dadbdc; }
.group { display: flex; flex-direction: column; border-right: 1px solid #dfe0e1; height: 92px; margin-top: 0; }
.g-main { flex: 1; display: flex; align-items: flex-start; min-height: 0; }
.g-label { height: 18px; line-height: 18px; text-align: center; color: #555; flex: none; }
.g-clip { width: 263px; }
.g-org { width: 165px; }
.g-new { width: 83px; }
.g-open { width: 133px; }
.g-sel { width: 115px; }
.big { display: flex; flex-direction: column; align-items: center; padding-top: 7px; line-height: 13px; text-align: center; white-space: nowrap; }
.big svg { margin-bottom: 4px; }
.big .pin-ic { margin: 4px 0 8px; }
.big span svg { display: inline-block; margin: 3px 0 0; }
.dis, .dis span { color: #808080; }
.b-pin { width: 64px; margin-left: 7px; }
.b-copy { width: 30px; margin-left: 8px; }
.b-paste { width: 30px; margin-left: 12px; }
.stack { display: flex; flex-direction: column; padding-top: 4px; margin-left: 10px; }
.small { height: 22px; display: flex; align-items: center; white-space: nowrap; gap: 3px; }
.small > svg:first-child { width: 16px; }
.dd { margin-left: 3px; color: #444; }
.stack-org { padding-top: 9px; }
.stack-org .small { height: 29px; }
.stack-org-a { margin-left: 8px; width: 78px; }
.org-div { width: 1px; height: 60px; background: #dcdcdc; margin-top: 6px; }
.stack-org-b { margin-left: 4px; }
.b-new { width: 40px; margin-left: 4px; }
.stack-new { margin-left: 9px; }
.stack-new .small { gap: 0; }
.stack-new .dd { margin-left: 3px; }
.b-prop { width: 62px; margin-left: 0; }
.stack-open { margin-left: 2px; }
.b-prop svg { margin-bottom: 3px; }
.stack-sel { margin-left: 7px; }

.addr-row { height: 33px; flex: none; display: flex; align-items: center; font-size: 11.500px; }
.nav-a { margin-left: 12px; color: #555; }
.nav-b { margin-left: 15px; }
.nav-c { margin-left: 9px; color: #9a9a9a; }
.nav-d { margin-left: 15px; color: #555; }
.addr { margin-left: 9px; width: 450px; height: 23px; border: 1px solid #d9d9d9; display: flex; align-items: center; padding-left: 2px; color: #333; white-space: nowrap; }
.addr .sep-c { margin: 0 8px 0 9px; color: #666; }
.addr .sep-first { margin: 0 9px 0 8px; }
.addr-end { margin-left: auto; display: flex; align-items: center; color: #666; height: 100%; }
.addr-reload { margin-left: 4px; width: 20px; height: 100%; border-left: 1px solid #d9d9d9; display: flex; align-items: center; justify-content: center; }
.search { margin-left: 13px; width: 200px; height: 23px; border: 1px solid #d9d9d9; display: flex; align-items: center; justify-content: space-between; padding: 0 7px; color: #6d6d6d; }

.content { flex: 1; min-height: 0; display: flex; }
.nav-pane { width: 157px; flex: none; display: flex; }
.tree { flex: 1; padding-top: 1px; color: #222; overflow: hidden; font-size: 11.300px; }
.tree li { height: 24px; display: flex; align-items: center; white-space: nowrap; position: relative; }
.tree li svg { margin-right: 5px; }
.t1 { padding-left: 31px; }
.t2 { padding-left: 40px; }
.t1 svg { width: 17px; margin-right: 5px; }
.t2 svg { width: 16px; margin-right: 5px; }
.t3 { padding-left: 49px; margin-left: 0; }
.t3 svg { width: 16px; }
.t-sel { background: #d9d9d9; margin-right: 0; }
.vbar { width: 17px; flex: none; background: #f0f0f0; display: flex; flex-direction: column; align-items: center; justify-content: space-between; padding: 9px 0 7px; color: #444; position: relative; }
.vthumb { position: absolute; left: 0; right: 0; background: #cdcdcd; }
.vbar-nav { width: 17px; margin-left: 0; }
.vbar-nav .vthumb { top: 169px; height: 114px; }
.list-pane { flex: 1; min-width: 0; display: flex; flex-direction: column; padding-left: 3px; }
.list-main { flex: 1; min-height: 0; display: flex; }
.list-col { flex: 1; min-width: 0; display: flex; flex-direction: column; overflow: hidden; padding-left: 14px; }
.vbar-list .vthumb { top: 21px; height: 185px; }
.list-head { height: 33px; flex: none; display: grid; grid-template-columns: 257px 144px 120px 72px; align-items: center; position: relative; color: #555; padding-bottom: 3px; font-size: 11.300px; }
.list-head span { padding-left: 6px; border-left: 1px solid #e5e5e5; height: 22px; line-height: 22px; }
.list-head span:nth-child(2) { padding-left: 3px; border-left: 0; }
.list-head .sort-mark { position: absolute; left: 123px; top: 1px; padding: 0; border: 0; height: 8px; line-height: 8px; color: #888; }
.rows { padding-top: 0; }
.row { height: 21px; display: grid; grid-template-columns: 257px 144px 120px 72px; align-items: center; color: #6d6d6d; white-space: nowrap; font-size: 11.500px; }
.row span:first-child { display: flex; align-items: center; color: #222; padding-left: 5px; font-size: 12px; letter-spacing: 0; }
.row span:first-child svg { width: 14px; margin-right: 5px; }
.row span:nth-child(2), .row span:nth-child(3) { padding-left: 7px; overflow: hidden; }
.row span:nth-child(2) { letter-spacing: -.14px; }
.row span:nth-child(4) { text-align: right; }
.row-sel { background: #e5f3ff; }
.hbar { height: 16px; flex: none; background: #f0f0f0; display: flex; align-items: center; justify-content: space-between; padding: 0 5px 0 5px; color: #444; position: relative; margin: 0 17px 4px 0; }
.hthumb { position: absolute; left: 17px; width: 557px; top: 0; bottom: 0; background: #c6c6c6; }

.status { height: 20px; flex: none; display: flex; align-items: center; padding: 0 0 2px 14px; color: #555; position: relative; }
.st-a { width: 65px; }
.st-b { width: 85px; }
.views { margin-left: auto; display: flex; align-items: center; padding-right: 9px; gap: 3px; margin-top: 2px; }
.view-on { width: 22px; height: 21px; background: #cce8ff; border: 1px solid #99d1ff; display: flex; align-items: center; justify-content: center; }

.watermark { position: absolute; left: 1036px; top: 610px; pointer-events: none; }
.wm-text { font-family: "Liberation Sans", Arial, sans-serif; font-weight: 700; font-size: 52px; fill: rgba(130, 130, 130, .22); }
```
